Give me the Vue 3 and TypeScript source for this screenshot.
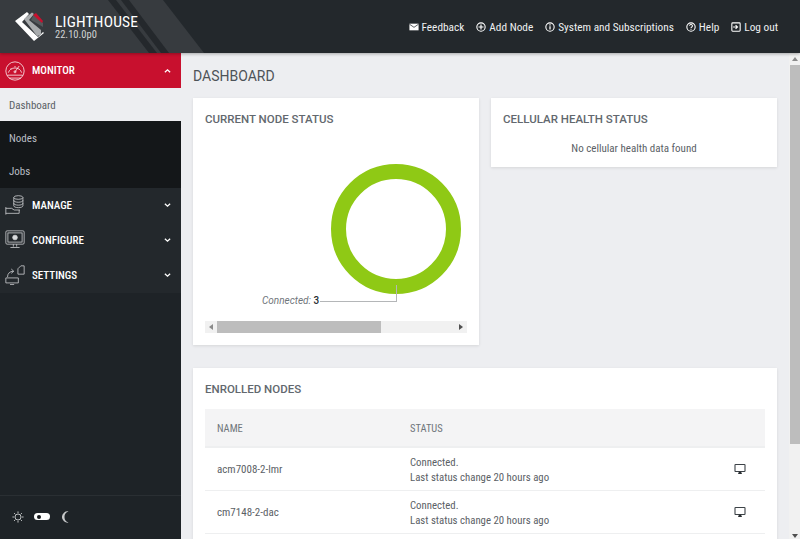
<template>
  <div class="shell">
    <header class="topbar">
      <div class="brand">
        <svg class="stripes" viewBox="0 0 240 53" preserveAspectRatio="none">
          <path d="M0 0H163L204 53H0Z" fill="#373b3f" />
          <path d="M108 0H116L157 53H149Z" fill="#24282c" />
          <path d="M121 0H129L169 53H161Z" fill="#24282c" />
        </svg>
        <svg class="logo" viewBox="0 0 30 30">
          <path d="M0 9L12 0L14 2L7 10L23 25L28 20L29 21L19 29Z" fill="#fff" />
          <path d="M9 7L17 .5L19 2L14 8L26 18L26 23L22 24Z" fill="#a9acae" />
          <path d="M16 8L19 2L28 11L28 15Z" fill="#55595c" />
          <path d="M18 3L21 1L28 9L27 11Z" fill="#c8102e" />
        </svg>
        <div class="brand-text">
          <div class="brand-name">LIGHTHOUSE</div>
          <div class="brand-version">22.10.0p0</div>
        </div>
      </div>
      <nav class="toplinks">
        <a v-for="link in topLinks" :key="link.label" class="toplink">
          <svg viewBox="0 0 12 12" class="topicon">
            <template v-if="link.icon === 'mail'">
              <path d="M.5 2h11v8H.5z" fill="#fff" />
              <path d="M.5 2.600L6 6.400l5.500-3.800" fill="none" stroke="#23282c" stroke-width=".9" />
            </template>
            <template v-else-if="link.icon === 'logout'">
              <rect x="1" y="1" width="10" height="10" rx="1" fill="none" stroke="#fff" stroke-width="1.300" />
              <path d="M2.500 6h5M5.500 3.800L7.800 6 5.500 8.200" fill="none" stroke="#fff" stroke-width="1.300" />
            </template>
            <template v-else>
              <circle cx="6" cy="6" r="5" fill="none" stroke="#fff" stroke-width="1.300" />
              <path v-if="link.icon === 'plus'" d="M6 3v6M3 6h6" stroke="#fff" stroke-width="1.400" />
              <path v-if="link.icon === 'info'" d="M6 5v4M6 2.800v1.300" stroke="#fff" stroke-width="1.500" />
              <path v-if="link.icon === 'help'" d="M4.300 4.600a1.700 1.700 0 1 1 2.600 1.500c-.6.3-.9.6-.9 1.300M6 8.300v1.100" fill="none" stroke="#fff" stroke-width="1.300" />
            </template>
          </svg>
          {{ link.label }}
        </a>
      </nav>
    </header>

    <div class="body">
      <aside class="sidebar">
        <div class="section active">
          <svg class="navicon" viewBox="0 0 24 24" fill="none" stroke="#fff" stroke-width=".9">
            <circle cx="12" cy="12" r="11" />
            <path d="M4 14a8.500 8.500 0 0 1 16 0M12 13l5-7M2.500 17h19M5 20.500h14M7 9l1 1M12 6v1.500" />
            <circle cx="12" cy="13" r="1.200" />
          </svg>
          <span class="section-label">MONITOR</span>
          <svg class="chev" viewBox="0 0 8 6"><path d="M1 4.500L4 1.700l3 2.800" fill="none" stroke="#fff" stroke-width="1.500" /></svg>
        </div>
        <a class="sub current">Dashboard</a>
        <a class="sub">Nodes</a>
        <a class="sub">Jobs</a>

        <div class="closed-group">
          <div v-for="item in closedSections" :key="item.label" class="section">
            <svg class="navicon" viewBox="0 0 24 24" fill="none" stroke="#d8dadc" stroke-width=".9">
              <template v-if="item.icon === 'manage'">
                <ellipse cx="16" cy="3" rx="5.500" ry="2.200" />
                <path d="M10.500 3v10c0 1.200 2.500 2.200 5.500 2.200s5.500-1 5.500-2.200V3M10.500 6.500c0 1.200 2.500 2.200 5.500 2.200s5.500-1 5.500-2.200M10.500 10c0 1.200 2.500 2.200 5.500 2.200s5.500-1 5.500-2.200" />
                <path d="M1 14.500v9M1 16h7l3 2h7M1 22h16v-4" />
              </template>
              <template v-else-if="item.icon === 'configure'">
                <rect x="1" y="1" width="22" height="16" rx="1.500" />
                <rect x="3.500" y="3.500" width="17" height="11" />
                <circle cx="12" cy="9" r="2.800" fill="#d8dadc" />
                <path d="M10 17v3M14 17v3M6.500 21h11" />
              </template>
              <template v-else>
                <path d="M15.500 11H23V1H19L15.500 4.500Z" />
                <path d="M3 14.500C3 10 6 7.500 10 7.500M7.500 4.800L10.500 7.500L7.500 10" />
                <path d="M1 15.500h15v6H1ZM6 23.500h5" />
              </template>
            </svg>
            <span class="section-label">{{ item.label }}</span>
            <svg class="chev" viewBox="0 0 8 6"><path d="M1 1.500L4 4.300l3-2.800" fill="none" stroke="#fff" stroke-width="1.500" /></svg>
          </div>
        </div>

        <div class="theme">
          <svg class="themeicon" viewBox="0 0 14 14" fill="none" stroke="#c7c9ca" stroke-width="1.100">
            <circle cx="7" cy="7" r="3.500" />
            <path d="M7 .5v2M7 11.500v2M.5 7h2M11.500 7h2M2.400 2.400l1.400 1.400M10.200 10.200l1.400 1.400M2.400 11.600l1.400-1.400M10.200 3.800l1.400-1.400" />
          </svg>
          <span class="toggle"><span class="knob"></span></span>
          <svg class="themeicon moon" viewBox="0 0 14 14">
            <path d="M10 .5A6.600 6.600 0 1 0 10 13.500A6.800 6.800 0 0 1 10 .5Z" fill="#c7c9ca" />
          </svg>
        </div>
      </aside>

      <main class="main">
        <div class="content">
          <h1 class="page-title">DASHBOARD</h1>
          <div class="cards">
            <section class="card node-status">
              <h2 class="card-title">CURRENT NODE STATUS</h2>
              <div class="chart-scroll">
                <div class="chart">
                  <div class="donut"></div>
                  <span class="legend">Connected: <b>3</b></span>
                  <span class="leader"></span>
                </div>
                <div class="hbar">
                  <span class="arrow left"></span>
                  <span class="track"><span class="thumb"></span></span>
                  <span class="arrow right"></span>
                </div>
              </div>
            </section>
            <section class="card health">
              <h2 class="card-title">CELLULAR HEALTH STATUS</h2>
              <p class="empty">No cellular health data found</p>
            </section>
          </div>

          <section class="card enrolled">
            <h2 class="card-title">ENROLLED NODES</h2>
            <div class="table-head">
              <span class="col-name">NAME</span>
              <span>STATUS</span>
            </div>
            <div v-for="node in nodes" :key="node" class="row">
              <span class="col-name">{{ node }}</span>
              <span class="col-status">Connected.<br />Last status change 20 hours ago</span>
              <svg class="monitor" viewBox="0 0 12 12">
                <rect x="1" y="1.500" width="10" height="7" rx=".6" fill="#fff" stroke="#3c4247" stroke-width="1.100" />
                <path d="M4 11h4L7 8.500H5Z" fill="#2a2f33" />
              </svg>
            </div>
          </section>
        </div>
        <div class="vbar">
          <span class="varrow up"></span>
          <span class="vthumb"></span>
          <span class="varrow down"></span>
        </div>
      </main>
    </div>
  </div>
</template>

<script setup lang="ts">
const topLinks = [
  { label: 'Feedback', icon: 'mail' },
  { label: 'Add Node', icon: 'plus' },
  { label: 'System and Subscriptions', icon: 'info' },
  { label: 'Help', icon: 'help' },
  { label: 'Log out', icon: 'logout' }
]

const closedSections = [
  { label: 'MANAGE', icon: 'manage' },
  { label: 'CONFIGURE', icon: 'configure' },
  { label: 'SETTINGS', icon: 'settings' }
]

const nodes = ['acm7008-2-lmr', 'cm7148-2-dac']
</script>

<style>
html, body { margin: 0; height: 100%; overflow: hidden; }
</style>

<style scoped>
.shell {
  width: 800px;
  height: 539px;
  display: flex;
  flex-direction: column;
  overflow: hidden;
  font-family: Roboto, "Liberation Sans", sans-serif;
  font-stretch: 87%;
  color: #4d5358;
  background: #edeef1;
}

.topbar {
  height: 53px;
  flex: none;
  display: flex;
  justify-content: space-between;
  align-items: center;
  background: #23282c;
  position: relative;
  z-index: 2;
  box-shadow: 0 1px 3px rgba(0, 0, 0, .3);
}

.brand {
  position: relative;
  width: 240px;
  height: 53px;
  display: flex;
  align-items: center;
  padding-left: 15px;
  box-sizing: border-box;
  gap: 10px;
}

.stripes { position: absolute; inset: 0; width: 240px; height: 53px; }
.logo { position: relative; width: 30px; height: 30px; }
.brand-text { position: relative; color: #fff; margin-top: 1px; }
.brand-name { font-size: 15.500px; line-height: 16px; letter-spacing: .2px; }
.brand-version { font-size: 10.500px; line-height: 10px; color: #d0d2d3; }

.toplinks { display: flex; gap: 12px; padding-right: 22px; margin-top: 1px; }
.toplink {
  display: flex;
  align-items: center;
  gap: 3px;
  color: #eef0f1;
  font-size: 11.300px;
  white-space: nowrap;
}
.topicon { width: 10px; height: 10px; }

.body { flex: 1; min-height: 0; display: flex; }

.sidebar {
  width: 181px;
  flex: none;
  display: flex;
  flex-direction: column;
  background: #1e2327;
}

.section {
  height: 35px;
  display: flex;
  align-items: center;
  padding: 0 10px 0 5px;
  box-sizing: border-box;
  color: #fff;
}

.section.active { background: #c8102e; }
.navicon { width: 20px; height: 20px; flex: none; margin-right: 7px; }
.section-label {
  flex: 1;
  font-size: 11px;
  font-weight: 500;
}
.chev { width: 7px; height: 6px; }

.sub {
  height: 33.300px;
  display: flex;
  align-items: center;
  padding: 1px 0 0 9px;
  box-sizing: border-box;
  font-size: 11px;
  background: #141719;
  color: #b9bdc4;
}
.sub.current { background: #edeef1; color: #5b6166; }

.closed-group { background: #23282c; }

.theme {
  margin-top: auto;
  height: 44px;
  border-top: 1px solid #2a2f33;
  box-sizing: border-box;
  display: flex;
  align-items: center;
  padding: 0 0 2px 12px;
  gap: 10px;
}
.themeicon { width: 12px; height: 12px; }
.toggle {
  width: 13px;
  height: 7px;
  border-radius: 4px;
  background: #fff;
  display: flex;
  align-items: center;
  padding-left: 3px;
}
.knob { width: 4px; height: 4px; border-radius: 50%; background: #14171a; }

.main { flex: 1; min-width: 0; display: flex; }
.content { flex: 1; min-width: 0; padding: 0 12px; overflow: hidden; }

.page-title {
  margin: 15px 0 13px;
  font-size: 14px;
  font-stretch: 100%;
  line-height: 17px;
  font-weight: 400;
  color: #4d5358;
}

.cards { display: flex; align-items: flex-start; gap: 12px; margin-bottom: 23px; }

.card {
  background: #fff;
  box-shadow: 0 1px 3px rgba(0, 0, 0, .1);
  box-sizing: border-box;
  padding: 0 12px;
}

.card-title {
  margin: 0;
  font-size: 11.500px;
  font-stretch: 100%;
  font-weight: 500;
  line-height: 14px;
  color: #62686e;
  padding-top: 14px;
}

.node-status { width: 286px; height: 247px; flex: none; }
.health { flex: 1; height: 69px; }
.empty { margin: 16px 0 0; text-align: center; font-size: 11px; color: #5b6166; }

.chart { position: relative; height: 195px; }
.donut {
  position: absolute;
  left: 126px;
  top: 38px;
  width: 130px;
  height: 130px;
  box-sizing: border-box;
  border: 15.500px solid #8fc915;
  border-radius: 50%;
}
.legend {
  position: absolute;
  left: 57px;
  top: 168.500px;
  font-size: 10px;
  font-stretch: 100%;
  font-style: italic;
  color: #70767b;
  white-space: nowrap;
}
.legend b { font-style: normal; font-weight: 500; color: #2a2f33; }
.leader {
  position: absolute;
  left: 115px;
  top: 158.500px;
  width: 77px;
  height: 17px;
  box-sizing: border-box;
  border-right: 1px solid #b4b6b8;
  border-bottom: 1px solid #b4b6b8;
}

.hbar {
  height: 12px;
  display: flex;
  align-items: center;
  background: #f1f1f1;
}
.arrow { width: 0; height: 0; border-top: 3px solid transparent; border-bottom: 3px solid transparent; }
.arrow.left { border-right: 4px solid #8a8a8a; margin: 0 4px; }
.arrow.right { border-left: 4px solid #505050; margin: 0 4px; }
.track { flex: 1; height: 100%; }
.thumb { display: block; width: 69%; height: 100%; background: #bdbdbd; }

.enrolled { height: 200px; }
.table-head {
  margin-top: 13px;
  height: 39px;
  box-sizing: border-box;
  display: flex;
  align-items: center;
  background: #f4f4f5;
  border-bottom: 2px solid #eeeff0;
  padding-top: 2px;
  font-size: 10.500px;
  color: #70767b;
}
.col-name { width: 205px; padding-left: 12px; box-sizing: border-box; flex: none; }

.row {
  height: 43px;
  box-sizing: border-box;
  display: flex;
  align-items: center;
  border-bottom: 1px solid #eeeff0;
  font-size: 10.800px;
  color: #5b6166;
}
.row .col-name { font-size: 11px; }
.col-status { flex: 1; line-height: 15px; padding-top: 2px; }
.monitor { width: 12px; height: 12px; margin-right: 19px; }

.vbar {
  width: 11px;
  flex: none;
  background: #f1f1f1;
  display: flex;
  flex-direction: column;
  align-items: center;
  padding-top: 4px;
  box-sizing: border-box;
}
.varrow { width: 0; height: 0; border-left: 3px solid transparent; border-right: 3px solid transparent; }
.varrow.up { border-bottom: 4px solid #8a8a8a; }
.varrow.down { border-top: 4px solid #505050; margin-top: 90px; }
.vthumb { width: 10px; height: 379px; margin: 4px 0 0 1px; background: #bdbdbd; }
</style>
